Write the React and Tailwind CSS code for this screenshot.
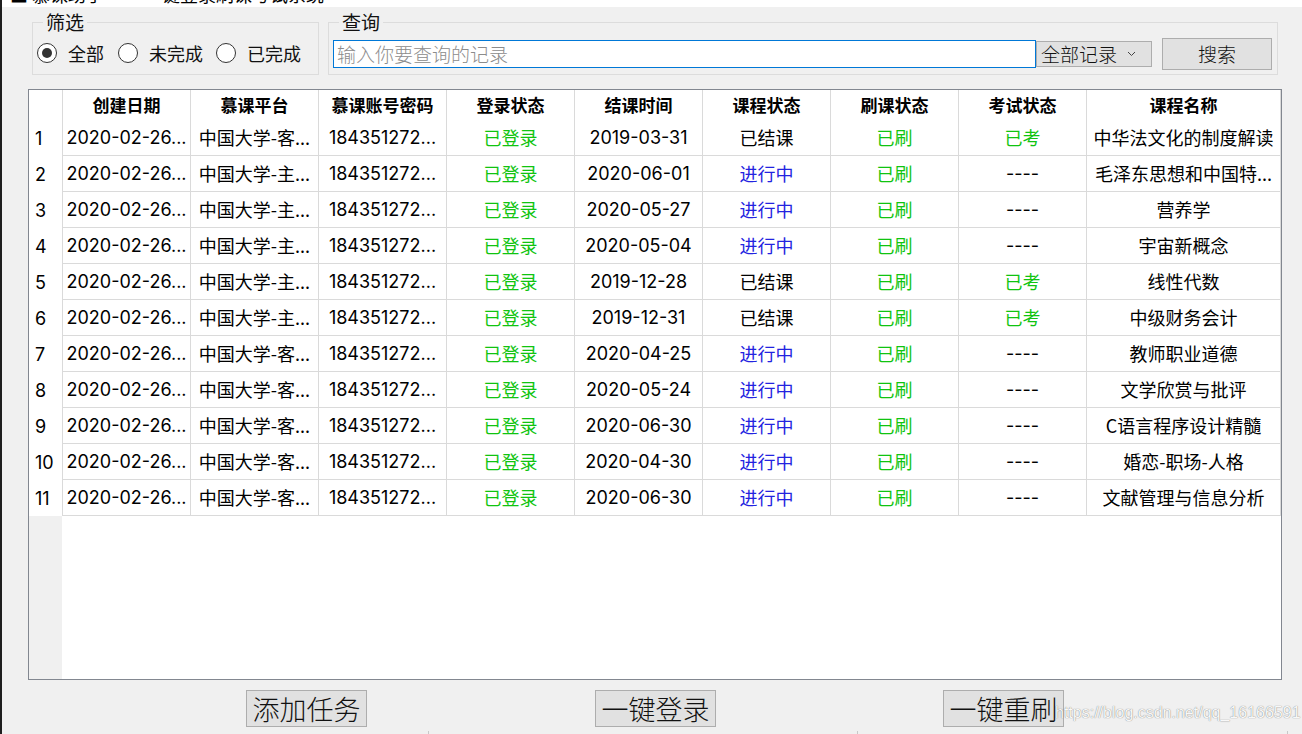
import React from "react";

const FONT = "font-['Inter','Noto_Sans_CJK_SC',sans-serif]";
const CJK = "font-['Noto_Sans_CJK_SC',sans-serif]";

const GREEN = "text-[#10c410]";
const BLUE = "text-[#2323e0]";

const rows = [
  ["客", "2019-03-31", "done", true, "中华法文化的制度解读"],
  ["主", "2020-06-01", "run", false, "毛泽东思想和中国特..."],
  ["主", "2020-05-27", "run", false, "营养学"],
  ["主", "2020-05-04", "run", false, "宇宙新概念"],
  ["主", "2019-12-28", "done", true, "线性代数"],
  ["主", "2019-12-31", "done", true, "中级财务会计"],
  ["客", "2020-04-25", "run", false, "教师职业道德"],
  ["客", "2020-05-24", "run", false, "文学欣赏与批评"],
  ["客", "2020-06-30", "run", false, "C语言程序设计精髓"],
  ["客", "2020-04-30", "run", false, "婚恋-职场-人格"],
  ["客", "2020-06-30", "run", false, "文献管理与信息分析"],
];

const headers = ["创建日期", "慕课平台", "慕课账号密码", "登录状态", "结课时间", "课程状态", "刷课状态", "考试状态"];

function Radio({ checked, label, className = "" }) {
  return (
    <div className={"flex items-center h-[20px] " + className}>
      <div className="w-[20px] h-[20px] rounded-full border-[1.5px] border-[#333] bg-white flex items-center justify-center">
        {checked && <div className="w-[10px] h-[10px] rounded-full bg-[#333]" />}
      </div>
      <span className={"ml-[11px] text-[18px] leading-[20px] text-[#111] " + CJK}>{label}</span>
    </div>
  );
}

function Cell({ children, className = "" }) {
  return (
    <div
      className={
        "w-[128px] shrink-0 border-l border-b border-[#dadada] flex items-center justify-center overflow-hidden whitespace-nowrap " +
        className
      }
    >
      {children}
    </div>
  );
}

export default function App() {
  return (
    <div className={"w-[1302px] h-[734px] bg-[#f0f0f0] overflow-hidden flex relative " + FONT}>
      <div className="w-[2px] h-full bg-[#1e1e1e] shrink-0" />
      <div className="flex-1 flex flex-col">
        {/* title strip */}
        <div className="h-[7px] bg-white overflow-hidden">
          <div className={"-mt-[15px] ml-[8px] text-[18px] leading-[18px] text-black whitespace-nowrap " + CJK}>
            ■ 慕课助手　　 一键登录刷课考试系统
          </div>
        </div>

        {/* top groups */}
        <div className="flex mt-[15px]">
          <div className="relative ml-[30px] w-[287px] h-[53px] border border-[#dcdcdc]">
            <span className={"absolute left-[10px] -top-[11px] px-[3px] bg-[#f0f0f0] text-[19px] leading-[20px] text-[#111] " + CJK}>
              筛选
            </span>
            <div className="flex pt-[20px] pl-[4px]">
              <Radio checked label="全部" />
              <Radio label="未完成" className="ml-[14px]" />
              <Radio label="已完成" className="ml-[13px]" />
            </div>
          </div>

          <div className="relative ml-[9px] w-[950px] h-[53px] border border-[#dcdcdc]">
            <span className={"absolute left-[10px] -top-[11px] px-[3px] bg-[#f0f0f0] text-[19px] leading-[20px] text-[#111] " + CJK}>
              查询
            </span>
            <div className="flex items-center h-[28px] mt-[17px] ml-[4px]">
              <div className="w-[703px] h-[28px] border border-[#0078d7] bg-white flex items-center pl-[3px]">
                <span className={"text-[19px] leading-[20px] text-[#8c8c8c] font-light " + CJK}>输入你要查询的记录</span>
              </div>
              <div className="w-[116px] h-[26px] bg-[#e1e1e1] border border-[#adadad] flex items-center pl-[4px]">
                <span className={"text-[19px] leading-[20px] text-[#111] font-light " + CJK}>全部记录</span>
                <svg className="ml-[10px]" width="9" height="6" viewBox="0 0 9 6">
                  <path d="M1 1 L4.5 4.5 L8 1" fill="none" stroke="#444" strokeWidth="1" />
                </svg>
              </div>
              <div className="ml-[10px] w-[110px] h-[32px] bg-[#e1e1e1] border border-[#adadad] flex items-center justify-center">
                <span className={"text-[19px] leading-[20px] text-[#111] font-light " + CJK}>搜索</span>
              </div>
            </div>
          </div>
        </div>

        {/* table */}
        <div className="mt-[14px] ml-[26px] w-[1254px] h-[591px] border border-[#828790] bg-white flex flex-col">
          <div className="flex h-[30px] shrink-0">
            <div className="w-[33px] shrink-0 bg-white" />
            {headers.map((h) => (
              <div
                key={h}
                className={"w-[128px] shrink-0 border-l border-[#dadada] flex items-center justify-center text-[17px] font-bold text-black " + CJK}
              >
                {h}
              </div>
            ))}
            <div className={"w-[195px] shrink-0 border-l border-r border-[#dadada] flex items-center justify-center text-[17px] font-bold text-black " + CJK}>
              课程名称
            </div>
          </div>

          {rows.map((r, i) => (
            <div key={i} className="flex h-[36px] shrink-0 text-[18px] text-black">
              <div className="w-[33px] shrink-0 bg-white flex items-center pl-[6px]">{i + 1}</div>
              <Cell>2020-02-26...</Cell>
              <Cell className={CJK}>{"中国大学-" + r[0] + "..."}</Cell>
              <Cell>184351272...</Cell>
              <Cell className={GREEN + " " + CJK}>已登录</Cell>
              <Cell>{r[1]}</Cell>
              <Cell className={(r[2] === "done" ? "text-black " : BLUE + " ") + CJK}>
                {r[2] === "done" ? "已结课" : "进行中"}
              </Cell>
              <Cell className={GREEN + " " + CJK}>已刷</Cell>
              <Cell className={r[3] ? GREEN + " " + CJK : ""}>{r[3] ? "已考" : "----"}</Cell>
              <div
                className={
                  "w-[195px] shrink-0 border-l border-r border-b border-[#dadada] flex items-center justify-center whitespace-nowrap overflow-hidden " +
                  CJK
                }
              >
                {r[4]}
              </div>
            </div>
          ))}

          <div className="flex flex-1">
            <div className="w-[33px] shrink-0 bg-[#f0f0f0]" />
            <div className="flex-1 bg-white" />
          </div>
        </div>

        {/* bottom buttons */}
        <div className="flex mt-[10px]">
          {["添加任务", "一键登录", "一键重刷"].map((t, i) => (
            <div
              key={t}
              className={
                (i === 0 ? "ml-[244px]" : i === 1 ? "ml-[228px]" : "ml-[227px]") +
                " w-[121px] h-[37px] bg-[#e1e1e1] border border-[#adadad] flex items-center justify-center"
              }
            >
              <span className={"text-[27px] leading-[30px] text-[#111] font-light " + CJK}>{t}</span>
            </div>
          ))}
        </div>
        <div className="flex mt-[4px] h-[3px]">
          <div className="ml-[426px] w-px h-full bg-[#c8c8c8]" />
          <div className="ml-[428px] w-px h-full bg-[#c8c8c8]" />
          <div className="ml-[429px] w-px h-full bg-[#c8c8c8]" />
        </div>
      </div>

      <div className="absolute left-[1055px] top-[704px] text-[16px] leading-[18px] text-[#f8f8f8] font-['Liberation_Sans',sans-serif] [text-shadow:0_0_1px_rgba(0,0,0,0.6)] whitespace-nowrap">
        https://blog.csdn.net/qq_16166591
      </div>
    </div>
  );
}
